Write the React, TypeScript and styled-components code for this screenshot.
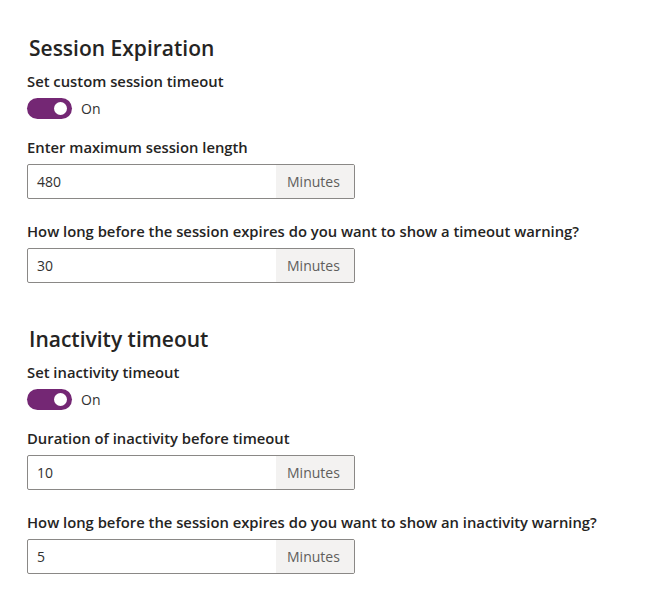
import React from "react";
import styled, { createGlobalStyle } from "styled-components";

const GlobalStyle = createGlobalStyle`
  body {
    margin: 0;
    background: #fff;
    font-family: "Open Sans", "Noto Sans", sans-serif;
    color: #323130;
  }
`;

const Page = styled.div`
  padding: 34px 0 0 27px;
  width: 620px;
`;

const Section = styled.section`
  margin-bottom: 42px;
`;

const Heading = styled.h2`
  margin: 0 0 9px 2px;
  font-size: 21px;
  font-weight: 600;
  line-height: 28px;
  color: #252423;
`;

const Field = styled.div<{ $gap: number }>`
  margin-bottom: ${(p) => p.$gap}px;
`;

const Label = styled.label`
  display: block;
  font-size: 14.8px;
  font-weight: 600;
  line-height: 20px;
  margin-bottom: 7px;
  color: #252423;
`;

const ToggleRow = styled.div`
  display: flex;
  align-items: center;
  gap: 9px;
  height: 21px;
`;

const Track = styled.span<{ $on: boolean }>`
  position: relative;
  width: 45px;
  height: 21px;
  border-radius: 11px;
  background: ${(p) => (p.$on ? "#742774" : "#fff")};
`;

const Knob = styled.span<{ $on: boolean }>`
  position: absolute;
  top: 4px;
  left: ${(p) => (p.$on ? "27px" : "5px")};
  width: 13px;
  height: 13px;
  border-radius: 50%;
  background: #fff;
`;

const ToggleText = styled.span`
  font-size: 14px;
  color: #323130;
`;

const InputBox = styled.div`
  display: flex;
  width: 328px;
  height: 35px;
  border: 1px solid #8a8886;
  border-radius: 2px;
  box-sizing: border-box;
  overflow: hidden;
`;

const Value = styled.div`
  flex: 1;
  display: flex;
  align-items: center;
  padding-left: 9px;
  font-size: 14px;
  color: #323130;
`;

const Suffix = styled.div`
  display: flex;
  align-items: center;
  padding: 0 10px 0 11px;
  width: 78px;
  box-sizing: border-box;
  background: #f3f2f1;
  font-size: 14px;
  color: #605e5c;
`;

function Toggle({ label, on }: { label: string; on: boolean }) {
  return (
    <Field $gap={18}>
      <Label>{label}</Label>
      <ToggleRow>
        <Track $on={on}>
          <Knob $on={on} />
        </Track>
        <ToggleText>{on ? "On" : "Off"}</ToggleText>
      </ToggleRow>
    </Field>
  );
}

function MinutesInput({ label, value }: { label: string; value: string }) {
  return (
    <Field $gap={22}>
      <Label>{label}</Label>
      <InputBox>
        <Value>{value}</Value>
        <Suffix>Minutes</Suffix>
      </InputBox>
    </Field>
  );
}

export default function App() {
  return (
    <Page>
      <GlobalStyle />
      <Section>
        <Heading>Session Expiration</Heading>
        <Toggle label="Set custom session timeout" on />
        <MinutesInput label="Enter maximum session length" value="480" />
        <MinutesInput
          label="How long before the session expires do you want to show a timeout warning?"
          value="30"
        />
      </Section>
      <Section>
        <Heading>Inactivity timeout</Heading>
        <Toggle label="Set inactivity timeout" on />
        <MinutesInput label="Duration of inactivity before timeout" value="10" />
        <MinutesInput
          label="How long before the session expires do you want to show an inactivity warning?"
          value="5"
        />
      </Section>
    </Page>
  );
}
